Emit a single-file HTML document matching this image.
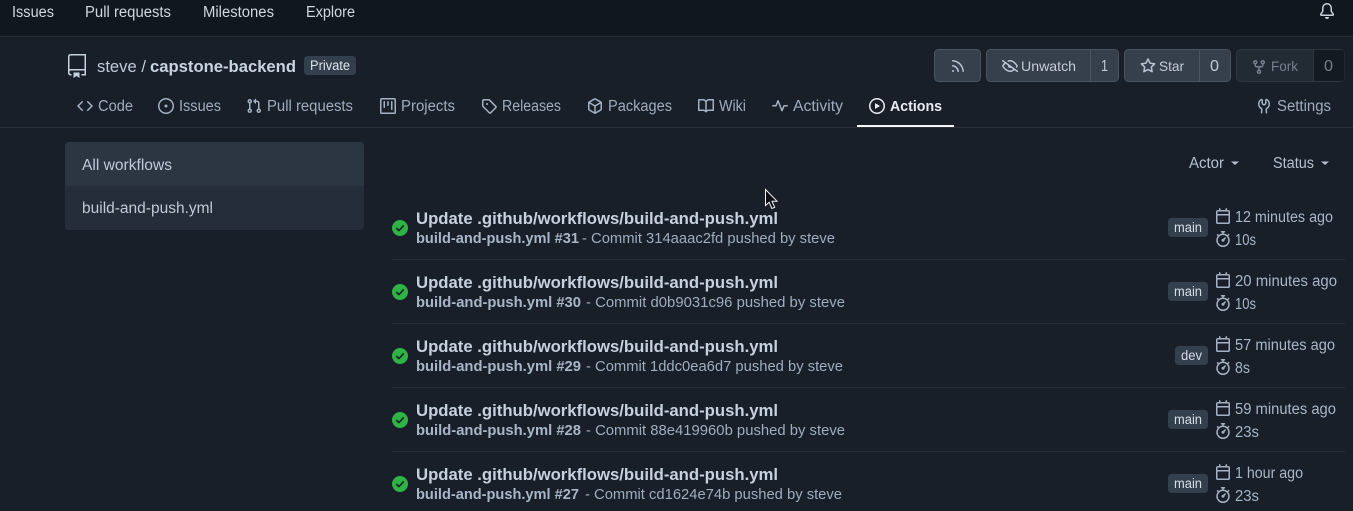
<!DOCTYPE html>
<html lang="en"><head><meta charset="utf-8"><title>Actions</title>
<style>
html,body{margin:0;padding:0;background:#181f28;width:1353px;height:511px;overflow:hidden}
svg{display:block}
text{font-family:"Liberation Sans",Arial,sans-serif;font-size:15.5px;fill:#aab7c7}
.nav{fill:#d0d7e0;font-size:15.500px}
.tab{fill:#9fadbf;font-size:15.500px}
.btn{fill:#c3ccd8;font-size:14px}
.dis{fill:#77818e;font-size:14px}
.ti{fill:#c6d1de;font-size:16.200px;font-weight:bold}
.sb{fill:#a9b6c7;font-size:15px;font-weight:bold}
.sr{fill:#9fadbf;font-size:15px}
.tm{fill:#a9b6c7;font-size:15.500px}
.bd{fill:#d5dce5;font-size:13.500px}
.sd{fill:#bfcad8;font-size:15.500px}
.ic{fill:#a5b2c3}
</style></head><body>
<svg width="1353" height="511" viewBox="0 0 1353 511" xmlns="http://www.w3.org/2000/svg">
<defs>
<symbol id="code" viewBox="0 0 16 16"><path d="m11.28 3.22 4.25 4.25a.75.75 0 0 1 0 1.06l-4.25 4.25a.749.749 0 0 1-1.275-.326.749.749 0 0 1 .215-.734L13.94 8l-3.72-3.72a.749.749 0 0 1 .326-1.275.749.749 0 0 1 .734.215Zm-6.56 0a.751.751 0 0 1 1.042.018.751.751 0 0 1 .018 1.042L2.06 8l3.72 3.72a.749.749 0 0 1-.326 1.275.749.749 0 0 1-.734-.215L.47 8.53a.75.75 0 0 1 0-1.06Z"/></symbol>
<symbol id="issue" viewBox="0 0 16 16"><path d="M8 9.5a1.5 1.5 0 1 0 0-3 1.5 1.5 0 0 0 0 3Z"/><path d="M8 0a8 8 0 1 1 0 16A8 8 0 0 1 8 0ZM1.5 8a6.5 6.5 0 1 0 13 0 6.5 6.5 0 0 0-13 0Z"/></symbol>
<symbol id="pr" viewBox="0 0 16 16"><path d="M1.5 3.25a2.25 2.25 0 1 1 3 2.122v5.256a2.251 2.251 0 1 1-1.5 0V5.372A2.25 2.25 0 0 1 1.5 3.25Zm5.677-.177L9.573.677A.25.25 0 0 1 10 .854V2.5h1A2.5 2.5 0 0 1 13.5 5v5.628a2.251 2.251 0 1 1-1.5 0V5a1 1 0 0 0-1-1h-1v1.646a.25.25 0 0 1-.427.177L7.177 3.427a.25.25 0 0 1 0-.354ZM3.75 2.5a.75.75 0 1 0 0 1.5.75.75 0 0 0 0-1.5Zm0 9.5a.75.75 0 1 0 0 1.5.75.75 0 0 0 0-1.5Zm8.25.75a.75.75 0 1 0 1.5 0 .75.75 0 0 0-1.5 0Z"/></symbol>
<symbol id="proj" viewBox="0 0 16 16"><path d="M1.75 0h12.5C15.216 0 16 .784 16 1.750v12.500A1.750 1.750 0 0 1 14.250 16H1.750A1.750 1.750 0 0 1 0 14.250V1.750C0 .784.784 0 1.750 0ZM1.500 1.750v12.500c0 .138.112.25.25.25h12.500a.25.25 0 0 0 .25-.25V1.750a.25.25 0 0 0-.25-.25H1.750a.25.25 0 0 0-.25.25ZM11.750 3a.75.75 0 0 1 .75.75v7.500a.75.75 0 0 1-1.500 0v-7.500a.75.75 0 0 1 .75-.75Zm-8.250.75a.75.75 0 0 1 1.500 0v5.500a.75.75 0 0 1-1.500 0ZM8 3a.75.75 0 0 1 .75.75v3.500a.75.75 0 0 1-1.500 0v-3.500A.75.75 0 0 1 8 3Z"/></symbol>
<symbol id="tag" viewBox="0 0 16 16"><path d="M1 7.775V2.75C1 1.784 1.784 1 2.75 1h5.025c.464 0 .91.184 1.238.513l6.25 6.25a1.75 1.75 0 0 1 0 2.474l-5.026 5.026a1.75 1.75 0 0 1-2.474 0l-6.25-6.25A1.752 1.752 0 0 1 1 7.775Zm1.5 0c0 .066.026.13.073.177l6.25 6.25a.25.25 0 0 0 .354 0l5.025-5.025a.25.25 0 0 0 0-.354l-6.25-6.25a.25.25 0 0 0-.177-.073H2.75a.25.25 0 0 0-.25.25ZM6 5a1 1 0 1 1 0 2 1 1 0 0 1 0-2Z"/></symbol>
<symbol id="pkg" viewBox="0 0 16 16"><path d="m8.878.392 5.25 3.045c.54.314.872.89.872 1.514v6.098a1.75 1.75 0 0 1-.872 1.514l-5.25 3.045a1.75 1.75 0 0 1-1.756 0l-5.25-3.045A1.75 1.75 0 0 1 1 11.049V4.951c0-.624.332-1.201.872-1.514L7.122.392a1.75 1.75 0 0 1 1.756 0ZM7.875 1.69l-4.63 2.685L8 7.133l4.755-2.758-4.63-2.685a.248.248 0 0 0-.25 0ZM2.5 5.677v5.372c0 .09.047.171.125.216l4.625 2.683V8.432Zm6.25 8.271 4.625-2.683a.25.25 0 0 0 .125-.216V5.677L8.75 8.432Z"/></symbol>
<symbol id="book" viewBox="0 0 16 16"><path d="M0 1.75A.75.75 0 0 1 .75 1h4.253c1.227 0 2.317.59 3 1.501A3.743 3.743 0 0 1 11.006 1h4.245a.75.75 0 0 1 .75.75v10.5a.75.75 0 0 1-.75.75h-4.507a2.25 2.25 0 0 0-1.591.659l-.622.621a.75.75 0 0 1-1.06 0l-.622-.621A2.25 2.25 0 0 0 5.258 13H.75a.75.75 0 0 1-.75-.75Zm7.251 10.324.004-5.073-.002-2.253A2.25 2.25 0 0 0 5.003 2.5H1.5v9h3.757a3.75 3.75 0 0 1 1.994.574ZM8.755 4.75l-.004 7.322a3.752 3.752 0 0 1 1.992-.572H14.5v-9h-3.495a2.25 2.25 0 0 0-2.25 2.25Z"/></symbol>
<symbol id="pulse" viewBox="0 0 16 16"><path d="M6 2c.306 0 .582.187.696.471L10 10.731l1.304-3.26A.751.751 0 0 1 12 7h3.25a.75.75 0 0 1 0 1.5h-2.742l-1.812 4.528a.751.751 0 0 1-1.392 0L6 4.77 4.696 8.03A.75.75 0 0 1 4 8.5H.75a.75.75 0 0 1 0-1.5h2.742l1.812-4.529A.751.751 0 0 1 6 2Z"/></symbol>
<symbol id="play" viewBox="0 0 16 16"><path d="M8 0a8 8 0 1 1 0 16A8 8 0 0 1 8 0ZM1.5 8a6.5 6.5 0 1 0 13 0 6.5 6.5 0 0 0-13 0Zm4.879-2.773 4.264 2.559a.25.25 0 0 1 0 .428l-4.264 2.559A.25.25 0 0 1 6 10.559V5.442a.25.25 0 0 1 .379-.215Z"/></symbol>
<symbol id="tools" viewBox="0 0 16 16"><path d="M5.433 2.304A4.492 4.492 0 0 0 3.5 6c0 1.598.832 3.002 2.09 3.802.518.328.929.923.902 1.64v.008l-.164 3.337a.75.75 0 1 1-1.498-.073l.163-3.33c.002-.085-.05-.216-.207-.316A5.996 5.996 0 0 1 2 6a5.993 5.993 0 0 1 2.567-4.92 1.482 1.482 0 0 1 1.673-.04c.462.296.76.827.76 1.423v2.82c0 .082.041.16.11.206l.75.51a.25.25 0 0 0 .28 0l.75-.51A.249.249 0 0 0 9 5.282V2.463c0-.596.298-1.127.76-1.423a1.482 1.482 0 0 1 1.673.04A5.993 5.993 0 0 1 14 6a5.996 5.996 0 0 1-2.786 5.068c-.157.1-.209.23-.207.315l.163 3.33a.752.752 0 0 1-1.094.714.75.75 0 0 1-.404-.64l-.164-3.345c-.027-.717.384-1.312.902-1.64A4.495 4.495 0 0 0 12.5 6a4.492 4.492 0 0 0-1.933-3.696c-.024-.017-.067-.04-.143.008A.181.181 0 0 0 10.5 2.463v2.82a1.75 1.75 0 0 1-.767 1.447l-.75.51a1.75 1.75 0 0 1-1.966 0l-.75-.51A1.75 1.75 0 0 1 5.5 5.282v-2.82a.18.18 0 0 0-.076-.151c-.076-.048-.119-.025-.143-.008Z"/></symbol>
<symbol id="rss" viewBox="0 0 16 16"><path d="M2.002 2.725a.75.75 0 0 1 .797-.699C8.79 2.42 13.58 7.21 13.974 13.201a.75.75 0 0 1-1.497.098 10.502 10.502 0 0 0-9.776-9.776.747.747 0 0 1-.7-.798ZM2.84 7.05h-.002a7.002 7.002 0 0 1 6.113 6.111.75.75 0 0 1-1.49.178 5.503 5.503 0 0 0-4.8-4.8.75.75 0 0 1 .179-1.489ZM2 13a1 1 0 1 1 2 0 1 1 0 0 1-2 0Z"/></symbol>
<symbol id="eye" viewBox="0 0 16 16"><path d="M.143 2.31a.75.75 0 0 1 1.047-.167l14.5 10.5a.75.75 0 1 1-.88 1.214l-2.248-1.628C11.346 13.19 9.792 14 8 14c-1.981 0-3.67-.992-4.933-2.078C1.797 10.832.88 9.577.43 8.9a1.619 1.619 0 0 1 0-1.797c.353-.533.995-1.42 1.868-2.305L.31 3.357A.75.75 0 0 1 .143 2.31Zm1.536 5.622A.12.12 0 0 0 1.657 8c0 .021.006.045.022.068.412.621 1.242 1.75 2.366 2.717C5.175 11.758 6.527 12.5 8 12.5c1.195 0 2.31-.488 3.29-1.191L9.063 9.695A2 2 0 0 1 6.058 7.52L3.529 5.688a14.207 14.207 0 0 0-1.85 2.244ZM8 3.5c-.516 0-1.017.09-1.499.251a.75.75 0 1 1-.473-1.423A6.207 6.207 0 0 1 8 2c1.981 0 3.67.992 4.933 2.078 1.27 1.091 2.187 2.345 2.637 3.023a1.62 1.62 0 0 1 0 1.798c-.11.166-.248.365-.41.587a.75.75 0 1 1-1.21-.887c.148-.201.272-.382.371-.53a.119.119 0 0 0 0-.137c-.412-.621-1.242-1.75-2.366-2.717C10.825 4.242 9.473 3.5 8 3.5Z"/></symbol>
<symbol id="star" viewBox="0 0 16 16"><path d="M8 .25a.75.75 0 0 1 .673.418l1.882 3.815 4.21.612a.75.75 0 0 1 .416 1.279l-3.046 2.97.719 4.192a.751.751 0 0 1-1.088.791L8 12.347l-3.766 1.98a.75.75 0 0 1-1.088-.79l.72-4.194L.818 6.374a.75.75 0 0 1 .416-1.28l4.21-.611L7.327.668A.75.75 0 0 1 8 .25Zm0 2.445L6.615 5.5a.75.75 0 0 1-.564.41l-3.097.45 2.24 2.184a.75.75 0 0 1 .216.664l-.528 3.084 2.769-1.456a.75.75 0 0 1 .698 0l2.77 1.456-.53-3.084a.75.75 0 0 1 .216-.664l2.24-2.183-3.096-.45a.75.75 0 0 1-.564-.41L8 2.694Z"/></symbol>
<symbol id="fork" viewBox="0 0 16 16"><path d="M5 5.372v.878c0 .414.336.75.75.75h4.5a.75.75 0 0 0 .75-.75v-.878a2.25 2.25 0 1 1 1.5 0v.878a2.25 2.25 0 0 1-2.25 2.25h-1.5v2.128a2.251 2.251 0 1 1-1.5 0V8.5h-1.5A2.25 2.25 0 0 1 3.5 6.25v-.878a2.25 2.25 0 1 1 1.5 0ZM5 3.25a.75.75 0 1 0-1.5 0 .75.75 0 0 0 1.5 0Zm6.75.75a.75.75 0 1 0 0-1.5.75.75 0 0 0 0 1.5Zm-3 8.75a.75.75 0 1 0-1.5 0 .75.75 0 0 0 1.5 0Z"/></symbol>
<symbol id="bell" viewBox="0 0 16 16"><path d="M8 16a2 2 0 0 0 1.985-1.75c.017-.137-.097-.25-.235-.25h-3.5c-.138 0-.252.113-.235.25A2 2 0 0 0 8 16ZM3 5a5 5 0 0 1 10 0v2.947c0 .05.015.098.042.139l1.703 2.555A1.519 1.519 0 0 1 13.482 13H2.518a1.516 1.516 0 0 1-1.263-2.36l1.703-2.554A.255.255 0 0 0 3 7.947Zm5-3.5A3.5 3.5 0 0 0 4.5 5v2.947c0 .346-.102.683-.294.97l-1.703 2.556a.017.017 0 0 0-.003.01l.001.006c0 .002.002.004.004.006l.006.004.007.001h10.964l.007-.001.006-.004.004-.006.001-.007a.017.017 0 0 0-.003-.01l-1.703-2.554a1.745 1.745 0 0 1-.294-.97V5A3.5 3.5 0 0 0 8 1.5Z"/></symbol>
<symbol id="cal" viewBox="0 0 16 16"><path d="M4.75 0a.75.75 0 0 1 .75.75V2h5V.75a.75.75 0 0 1 1.5 0V2h1.25c.966 0 1.75.784 1.75 1.75v10.5A1.75 1.75 0 0 1 13.25 16H2.75A1.75 1.75 0 0 1 1 14.25V3.75C1 2.784 1.784 2 2.75 2H4V.75A.75.75 0 0 1 4.75 0ZM2.5 7.5v6.75c0 .138.112.25.25.25h10.5a.25.25 0 0 0 .25-.25V7.5Zm10.75-4H2.75a.25.25 0 0 0-.25.25V6h11V3.75a.25.25 0 0 0-.25-.25Z"/></symbol>
<symbol id="watch" viewBox="0 0 16 16"><path d="M5.75.75A.75.75 0 0 1 6.5 0h3a.75.75 0 0 1 0 1.5h-.75v1l-.001.041a6.724 6.724 0 0 1 3.464 1.435l.007-.006.75-.75a.75.75 0 1 1 1.06 1.06l-.75.75-.006.007a6.75 6.75 0 1 1-10.548 0L2.72 5.03l-.75-.75a.751.751 0 0 1 .018-1.042.751.751 0 0 1 1.042-.018l.75.75.007.006A6.72 6.72 0 0 1 7.25 2.541V1.5H6.5a.75.75 0 0 1-.75-.75ZM8 14.5a5.25 5.25 0 1 0-.001-10.501A5.25 5.25 0 0 0 8 14.5Zm.389-6.7 1.33-1.33a.75.75 0 1 1 1.061 1.06L9.45 8.861A1.503 1.503 0 0 1 8 10.75a1.499 1.499 0 1 1 .389-2.95Z"/></symbol>
<symbol id="ok" viewBox="0 0 16 16"><circle cx="8" cy="8" r="8" fill="#2fb344"/><path d="M4.6 8.4 6.9 10.6 11.4 5.8" fill="none" stroke="#14222a" stroke-width="1.6" stroke-linecap="round" stroke-linejoin="round"/></symbol>
</defs>

<rect width="1353" height="511" fill="#181f28"/>
<rect width="1353" height="36" fill="#10171f"/>
<rect y="36" width="1353" height="1" fill="#272e38"/>
<text class="nav" x="12" y="17" textLength="42" lengthAdjust="spacingAndGlyphs">Issues</text>
<text class="nav" x="85" y="17" textLength="86" lengthAdjust="spacingAndGlyphs">Pull requests</text>
<text class="nav" x="203" y="17" textLength="71" lengthAdjust="spacingAndGlyphs">Milestones</text>
<text class="nav" x="306" y="17" textLength="49" lengthAdjust="spacingAndGlyphs">Explore</text>
<use href="#bell" x="1319" y="3" width="16" height="16" fill="#c9d2dd"/>

<path d="M70.500 54.750H85.250V74.750H81.500M70.500 54.750A2 2 0 0 0 68.750 56.750V72.750A2 2 0 0 0 70.500 74.750H71.500M68.750 71.500A2 2 0 0 1 70.500 69.750H85" fill="none" stroke="#c6d1de" stroke-width="1.500"/>
<path d="M73.500 72.500H79.500V78L76.500 76 73.500 78Z" fill="#c6d1de"/>
<text x="97" y="72" textLength="49" lengthAdjust="spacingAndGlyphs" style="font-size:17px;fill:#c0cbd9">steve /</text>
<text x="150" y="72" textLength="146" lengthAdjust="spacingAndGlyphs" style="font-size:17px;font-weight:bold;fill:#c9d4e1">capstone-backend</text>
<rect x="304" y="56" width="52" height="19" rx="3.500" fill="#343f4d"/>
<text x="310" y="70" textLength="40" lengthAdjust="spacingAndGlyphs" style="font-size:13.500px;fill:#dde3eb">Private</text>

<!-- buttons -->
<rect x="934.500" y="49.500" width="46" height="32" rx="4" fill="#363f4c" stroke="#4b5562"/>
<use href="#rss" x="950" y="58" width="16" height="16" fill="#bac5d3"/>
<rect x="986.500" y="49.500" width="132" height="32" rx="4" fill="#363f4c" stroke="#4b5562"/>
<rect x="1090" y="50" width="1" height="31" fill="#4b5562"/>
<use href="#eye" x="1002" y="58" width="16" height="16" fill="#bac5d3"/>
<text class="btn" x="1021" y="71" textLength="55" lengthAdjust="spacingAndGlyphs">Unwatch</text>
<text class="btn" x="1101" y="71" textLength="7" lengthAdjust="spacingAndGlyphs" style="font-size:16px">1</text>
<rect x="1124.500" y="49.500" width="106" height="32" rx="4" fill="#363f4c" stroke="#4b5562"/>
<rect x="1199" y="50" width="1" height="31" fill="#4b5562"/>
<use href="#star" x="1140" y="58" width="16" height="16" fill="#bac5d3"/>
<text class="btn" x="1159" y="71" textLength="25" lengthAdjust="spacingAndGlyphs">Star</text>
<text class="btn" x="1210" y="71" textLength="9" lengthAdjust="spacingAndGlyphs" style="font-size:16px">0</text>
<rect x="1236.500" y="49.500" width="108" height="32" rx="4" fill="#222a34" stroke="#2e3641"/>
<rect x="1313.500" y="50" width="31" height="31" rx="3" fill="#141a21"/>
<rect x="1313" y="50" width="1" height="31" fill="#2e3641"/>
<use href="#fork" x="1251" y="59" width="16" height="16" fill="#77818e"/>
<text class="dis" x="1271" y="71" textLength="27" lengthAdjust="spacingAndGlyphs">Fork</text>
<text class="dis" x="1324" y="71" textLength="9" lengthAdjust="spacingAndGlyphs" style="font-size:16px">0</text>

<!-- tabs -->
<use href="#code" x="77" y="98" width="16" height="16" class="ic"/>
<text class="tab" x="98" y="111" textLength="35" lengthAdjust="spacingAndGlyphs">Code</text>
<use href="#issue" x="158" y="98" width="16" height="16" class="ic"/>
<text class="tab" x="179" y="111" textLength="42" lengthAdjust="spacingAndGlyphs">Issues</text>
<use href="#pr" x="246" y="98" width="16" height="16" class="ic"/>
<text class="tab" x="267" y="111" textLength="86" lengthAdjust="spacingAndGlyphs">Pull requests</text>
<use href="#proj" x="380" y="98" width="16" height="16" class="ic"/>
<text class="tab" x="401" y="111" textLength="54" lengthAdjust="spacingAndGlyphs">Projects</text>
<use href="#tag" x="481" y="98" width="16" height="16" class="ic"/>
<text class="tab" x="502" y="111" textLength="59" lengthAdjust="spacingAndGlyphs">Releases</text>
<use href="#pkg" x="587" y="98" width="16" height="16" class="ic"/>
<text class="tab" x="608" y="111" textLength="64" lengthAdjust="spacingAndGlyphs">Packages</text>
<use href="#book" x="698" y="98" width="16" height="16" class="ic"/>
<text class="tab" x="719" y="111" textLength="27" lengthAdjust="spacingAndGlyphs">Wiki</text>
<use href="#pulse" x="772" y="98" width="16" height="16" class="ic"/>
<text class="tab" x="793" y="111" textLength="50" lengthAdjust="spacingAndGlyphs">Activity</text>
<use href="#play" x="869" y="98" width="16" height="16" fill="#e8edf3"/>
<text x="890" y="111" textLength="52" lengthAdjust="spacingAndGlyphs" style="font-size:15px;font-weight:bold;fill:#e8edf3">Actions</text>
<use href="#tools" x="1256" y="98" width="16" height="16" class="ic"/>
<text class="tab" x="1277" y="111" textLength="54" lengthAdjust="spacingAndGlyphs">Settings</text>
<rect y="127" width="1353" height="1" fill="#2a313b"/>
<rect x="857" y="125" width="97" height="2" fill="#f4f6f8"/>

<!-- sidebar -->
<rect x="65" y="142" width="299" height="88" rx="4" fill="#252d38"/>
<path d="M65 186V146a4 4 0 0 1 4-4H360a4 4 0 0 1 4 4V186Z" fill="#2c3643"/>
<text class="sd" x="82" y="170" textLength="90" lengthAdjust="spacingAndGlyphs">All workflows</text>
<text class="sd" x="82" y="213" textLength="131" lengthAdjust="spacingAndGlyphs">build-and-push.yml</text>

<!-- filters -->
<text x="1189" y="168" textLength="35" lengthAdjust="spacingAndGlyphs" style="fill:#b4c0cf">Actor</text>
<path d="M1231 161.500h8l-4 3.500Z" fill="#b4c0cf"/>
<text x="1273" y="168" textLength="41" lengthAdjust="spacingAndGlyphs" style="fill:#b4c0cf">Status</text>
<path d="M1321 161.500h8l-4 3.500Z" fill="#b4c0cf"/>

<!-- row 1 -->
<use href="#ok" x="392" y="220" width="16" height="16"/>
<text class="ti" x="416" y="224" textLength="362" lengthAdjust="spacingAndGlyphs">Update .github/workflows/build-and-push.yml</text>
<text class="sb" x="416" y="243" textLength="163" lengthAdjust="spacingAndGlyphs">build-and-push.yml #31</text>
<text class="sr" x="582" y="243" textLength="253" lengthAdjust="spacingAndGlyphs">- Commit 314aaac2fd pushed by steve</text>
<rect x="1168" y="218" width="40" height="19" rx="3.500" fill="#343f4d"/>
<text class="bd" x="1174" y="232" textLength="28" lengthAdjust="spacingAndGlyphs">main</text>
<use href="#cal" x="1215" y="208" width="16" height="16" class="ic"/>
<text class="tm" x="1235" y="222" textLength="98" lengthAdjust="spacingAndGlyphs">12 minutes ago</text>
<use href="#watch" x="1215" y="231" width="16" height="16" class="ic"/>
<text class="tm" x="1235" y="245" textLength="21" lengthAdjust="spacingAndGlyphs">10s</text>
<rect x="392" y="259" width="953" height="1" fill="#272e38"/>

<!-- row 2 -->
<use href="#ok" x="392" y="284" width="16" height="16"/>
<text class="ti" x="416" y="288" textLength="362" lengthAdjust="spacingAndGlyphs">Update .github/workflows/build-and-push.yml</text>
<text class="sb" x="416" y="307" textLength="165" lengthAdjust="spacingAndGlyphs">build-and-push.yml #30</text>
<text class="sr" x="586" y="307" textLength="259" lengthAdjust="spacingAndGlyphs">- Commit d0b9031c96 pushed by steve</text>
<rect x="1168" y="282" width="40" height="19" rx="3.500" fill="#343f4d"/>
<text class="bd" x="1174" y="296" textLength="28" lengthAdjust="spacingAndGlyphs">main</text>
<use href="#cal" x="1215" y="272" width="16" height="16" class="ic"/>
<text class="tm" x="1235" y="286" textLength="102" lengthAdjust="spacingAndGlyphs">20 minutes ago</text>
<use href="#watch" x="1215" y="295" width="16" height="16" class="ic"/>
<text class="tm" x="1235" y="309" textLength="21" lengthAdjust="spacingAndGlyphs">10s</text>
<rect x="392" y="323" width="953" height="1" fill="#272e38"/>

<!-- row 3 -->
<use href="#ok" x="392" y="348" width="16" height="16"/>
<text class="ti" x="416" y="352" textLength="362" lengthAdjust="spacingAndGlyphs">Update .github/workflows/build-and-push.yml</text>
<text class="sb" x="416" y="371" textLength="165" lengthAdjust="spacingAndGlyphs">build-and-push.yml #29</text>
<text class="sr" x="586" y="371" textLength="257" lengthAdjust="spacingAndGlyphs">- Commit 1ddc0ea6d7 pushed by steve</text>
<rect x="1175" y="346" width="33" height="19" rx="3.500" fill="#343f4d"/>
<text class="bd" x="1181" y="360" textLength="21" lengthAdjust="spacingAndGlyphs">dev</text>
<use href="#cal" x="1215" y="336" width="16" height="16" class="ic"/>
<text class="tm" x="1235" y="350" textLength="100" lengthAdjust="spacingAndGlyphs">57 minutes ago</text>
<use href="#watch" x="1215" y="359" width="16" height="16" class="ic"/>
<text class="tm" x="1235" y="373" textLength="15" lengthAdjust="spacingAndGlyphs">8s</text>
<rect x="392" y="387" width="953" height="1" fill="#272e38"/>

<!-- row 4 -->
<use href="#ok" x="392" y="412" width="16" height="16"/>
<text class="ti" x="416" y="416" textLength="362" lengthAdjust="spacingAndGlyphs">Update .github/workflows/build-and-push.yml</text>
<text class="sb" x="416" y="435" textLength="165" lengthAdjust="spacingAndGlyphs">build-and-push.yml #28</text>
<text class="sr" x="586" y="435" textLength="259" lengthAdjust="spacingAndGlyphs">- Commit 88e419960b pushed by steve</text>
<rect x="1168" y="410" width="40" height="19" rx="3.500" fill="#343f4d"/>
<text class="bd" x="1174" y="424" textLength="28" lengthAdjust="spacingAndGlyphs">main</text>
<use href="#cal" x="1215" y="400" width="16" height="16" class="ic"/>
<text class="tm" x="1235" y="414" textLength="101" lengthAdjust="spacingAndGlyphs">59 minutes ago</text>
<use href="#watch" x="1215" y="423" width="16" height="16" class="ic"/>
<text class="tm" x="1235" y="437" textLength="24" lengthAdjust="spacingAndGlyphs">23s</text>
<rect x="392" y="451" width="953" height="1" fill="#272e38"/>

<!-- row 5 -->
<use href="#ok" x="392" y="476" width="16" height="16"/>
<text class="ti" x="416" y="480" textLength="362" lengthAdjust="spacingAndGlyphs">Update .github/workflows/build-and-push.yml</text>
<text class="sb" x="416" y="499" textLength="163" lengthAdjust="spacingAndGlyphs">build-and-push.yml #27</text>
<text class="sr" x="585" y="499" textLength="257" lengthAdjust="spacingAndGlyphs">- Commit cd1624e74b pushed by steve</text>
<rect x="1168" y="474" width="40" height="19" rx="3.500" fill="#343f4d"/>
<text class="bd" x="1174" y="488" textLength="28" lengthAdjust="spacingAndGlyphs">main</text>
<use href="#cal" x="1215" y="464" width="16" height="16" class="ic"/>
<text class="tm" x="1235" y="478" textLength="68" lengthAdjust="spacingAndGlyphs">1 hour ago</text>
<use href="#watch" x="1215" y="487" width="16" height="16" class="ic"/>
<text class="tm" x="1235" y="501" textLength="24" lengthAdjust="spacingAndGlyphs">23s</text>

<!-- cursor -->
<path d="M765.500 189.500V205.500L769.200 202.200L771.800 208.500L774.700 207.300L772 201.200H777Z" fill="#0b0e12" stroke="#f2f4f6" stroke-width="1"/>
</svg>
</body></html>
